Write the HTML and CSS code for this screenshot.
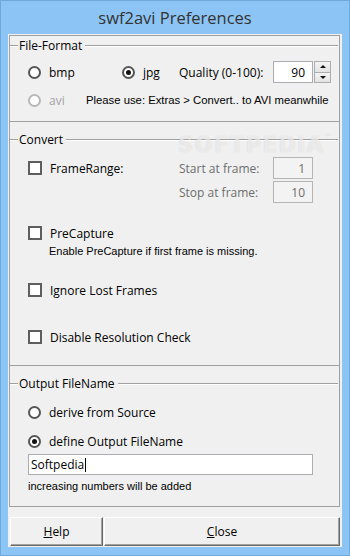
FILE: index.html
```html
<!DOCTYPE html>
<html>
<head>
<meta charset="utf-8">
<title>swf2avi Preferences</title>
<link rel="stylesheet" href="styles.css">
</head>
<body>
<div class="window">
  <div class="titlebar">swf2avi Preferences</div>
  <div class="client">
    <div class="frame">
      <section class="group g1">
        <div class="ghead"><span class="gl-left"></span><span class="gcap">File-Format</span><span class="gl-right"></span></div>
        <div class="row r1">
          <div class="opt w-bmp"><span class="radio"></span><span>bmp</span></div>
          <div class="opt w-jpg"><span class="radio on"></span><span>jpg</span></div>
          <span class="qlabel">Quality (0-100):</span>
          <span class="edit num">90</span>
          <span class="spin"><span class="sb up"></span><span class="sb down"></span></span>
        </div>
        <div class="row r2">
          <div class="opt w-avi dis"><span class="radio"></span><span>avi</span></div>
          <span class="small">Please use: Extras &gt; Convert.. to AVI meanwhile</span>
        </div>
      </section>

      <section class="group g2">
        <div class="ghead"><span class="gl-left"></span><span class="gcap">Convert</span><span class="gl-right"></span></div>
        <div class="frow">
          <div class="opt cbopt"><span class="check"></span><span>FrameRange:</span></div>
          <div class="fcol">
            <div class="fline"><span class="flabel">Start at frame:</span><span class="edit num dis">1</span></div>
            <div class="fline"><span class="flabel">Stop at frame:</span><span class="edit num dis">10</span></div>
          </div>
        </div>
        <div class="opt crow c-pre"><span class="check"></span><span>PreCapture</span></div>
        <div class="small hint-pre">Enable PreCapture if first frame is missing.</div>
        <div class="opt crow c-ign"><span class="check"></span><span>Ignore Lost Frames</span></div>
        <div class="opt crow c-dis"><span class="check"></span><span>Disable Resolution Check</span></div>
        <div class="wm" aria-hidden="true">SOFTPEDIA<span class="tm">™</span></div>
      </section>

      <section class="group g3">
        <div class="ghead"><span class="gl-left"></span><span class="gcap">Output FileName</span><span class="gl-right"></span></div>
        <div class="opt crow o-derive"><span class="radio"></span><span>derive from Source</span></div>
        <div class="opt crow o-define"><span class="radio on"></span><span>define Output FileName</span></div>
        <div class="edit fname">Softpedia<span class="caret"></span></div>
        <div class="small hint-out">increasing numbers will be added</div>
      </section>
    </div>
    <div class="buttons">
      <div class="btn help"><span><u>H</u>elp</span></div>
      <div class="btn close"><span><u>C</u>lose</span></div>
    </div>
  </div>
</div>
</body>
</html>
```

FILE: styles.css
```css
* { box-sizing: border-box; }
html, body { margin: 0; padding: 0; }
body {
  width: 350px;
  height: 556px;
  overflow: hidden;
  background: #8cc5f5;
  font-family: "Open Sans", "Liberation Sans", sans-serif;
  font-size: 12px;
  color: #000;
}
.window {
  height: 556px;
  display: flex;
  flex-direction: column;
  border: 1px solid #6fa9dc;
}
.titlebar {
  height: 33px;
  display: flex;
  align-items: center;
  justify-content: center;
  font-size: 16.5px;
  color: #333;
  padding-bottom: 1px;
}
.client {
  flex: 1;
  margin: 0 7px 8px 7px;
  background: #f0f0f0;
  padding: 1px 2px 0 1px;
  display: flex;
  flex-direction: column;
}
.frame {
  height: 472px;
  border: 1px solid #a0a0a0;
  display: flex;
  flex-direction: column;
}
.group { position: relative; }
.g1 { height: 86px; border-bottom: 1px solid #a0a0a0; }
.g2 { height: 244px; border-bottom: 1px solid #a0a0a0; }
.g3 { height: 140px; }
.ghead {
  display: flex;
  align-items: center;
  height: 20px;
}
.g2 .ghead, .g3 .ghead { margin-top: 8px; }
.gl-left, .gl-right {
  height: 2px;
  border-top: 1px solid #a0a0a0;
  border-bottom: 1px solid #fff;
}
.gl-left { width: 8px; }
.gl-right { flex: 1; margin-left: 2px; margin-right: 1px; }
.gcap { padding: 0 1px; font-size: 12px; line-height: 16px; }

.row { display: flex; align-items: center; height: 22px; padding-left: 18px; }
.r1 { margin-top: 5px; }
.r2 { margin-top: 6px; }
.opt { display: flex; align-items: center; gap: 8px; font-size: 12px; }
.w-bmp { width: 94px; }
.w-jpg { width: 57px; }
.w-avi { width: 58px; }
.qlabel { width: 94px; font-size: 12px; }
.opt.dis { color: #a3a3a3; }

.radio {
  width: 13px;
  height: 13px;
  border-radius: 50%;
  border: 2px solid #555;
  background: #fff;
  position: relative;
  flex: none;
}
.radio.on::after {
  content: "";
  position: absolute;
  left: 2px;
  top: 2px;
  width: 5px;
  height: 5px;
  border-radius: 50%;
  background: #111;
}
.dis .radio { border-color: #b8b8b8; }

.check {
  width: 14px;
  height: 14px;
  border: 2px solid #5e5e5e;
  background: #fff;
  flex: none;
}

.edit {
  height: 22px;
  border: 1px solid #abadb3;
  background: #fff;
  display: flex;
  align-items: center;
  font-size: 12px;
}
.edit.num { width: 40px; justify-content: flex-end; padding-right: 7px; }
.edit.dis { background: #f3f3f3; border-color: #b5b5b5; color: #6d6d6d; }

.spin {
  width: 17px;
  height: 22px;
  margin-left: 1px;
  display: flex;
  flex-direction: column;
}
.sb {
  flex: 1;
  border: 1px solid #adadad;
  background: linear-gradient(#f4f4f4, #e3e3e3);
  position: relative;
}
.sb.down { border-top: none; }
.sb::after {
  content: "";
  position: absolute;
  left: 5px;
  width: 0;
  height: 0;
  border-left: 3px solid transparent;
  border-right: 3px solid transparent;
}
.sb.up::after { top: 3px; border-bottom: 3px solid #111; }
.sb.down::after { top: 3px; border-top: 3px solid #111; }

.small {
  font-family: "Liberation Sans", Arial, sans-serif;
  font-size: 11px;
}
.r2 .small { font-size: 11.3px; }

.frow {
  display: flex;
  padding-left: 18px;
  margin-top: 7px;
}
.cbopt { width: 151px; height: 22px; align-self: flex-start; }
.fcol { display: flex; flex-direction: column; gap: 2px; }
.fline { display: flex; align-items: center; height: 22px; }
.flabel { width: 94px; color: #6d6d6d; font-size: 12px; }

.crow { height: 18px; padding-left: 18px; }
.c-pre { margin-top: 21px; }
.hint-pre { margin-top: 2px; height: 14px; line-height: 14px; padding-left: 39px; }
.c-ign { margin-top: 23px; }
.c-dis { margin-top: 29px; }

.wm {
  position: absolute;
  left: 168px;
  top: 14px;
  font-family: "DejaVu Sans", sans-serif;
  font-weight: bold;
  font-size: 21px;
  line-height: 18px;
  height: 18px;
  letter-spacing: 1.5px;
  color: rgba(255, 255, 255, 0.6);
  text-shadow: 0 0 1px rgba(120, 120, 120, 0.3);
  pointer-events: none;
  display: flex;
  align-items: flex-start;
}
.wm .tm { font-size: 8px; line-height: 8px; font-weight: normal; margin-top: -2px; }

.o-derive { margin-top: 9px; }
.o-define { margin-top: 11px; }
.fname {
  margin-top: 4px;
  margin-left: 18px;
  width: 285px;
  height: 21px;
  padding-left: 2px;
}
.caret {
  display: inline-block;
  width: 1px;
  height: 14px;
  background: #000;
  margin-left: 1px;
}
.hint-out { margin-top: 4px; height: 14px; line-height: 14px; padding-left: 18px; }

.buttons {
  display: flex;
  margin-top: 10px;
  padding-left: 1px;
  gap: 1px;
}
.btn {
  height: 29px;
  background: #f0f0f0;
  border: 1px solid;
  border-color: #fff #6a6a6a #6a6a6a #fff;
  box-shadow: inset -1px -1px #a0a0a0;
  display: flex;
  align-items: center;
  justify-content: center;
  font-size: 12px;
}
.help { width: 93px; }
.close { flex: 1; }
```
